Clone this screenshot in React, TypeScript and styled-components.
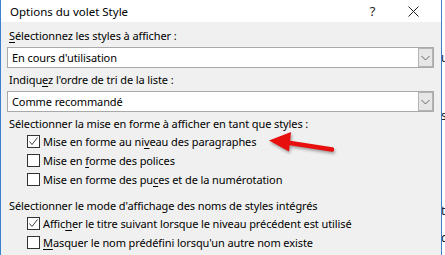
import styled, { createGlobalStyle } from "styled-components";

const GlobalStyle = createGlobalStyle`
  html, body {
    margin: 0;
    padding: 0;
    width: 445px;
    height: 255px;
    overflow: hidden;
    background: #fff;
  }
  body {
    font-family: "Noto Sans", "Open Sans", sans-serif;
    font-size: 11px;
    letter-spacing: -0.1px;
    color: #000;
  }
`;

const Screen = styled.div`
  display: flex;
  width: 445px;
  height: 255px;
  background: #fff;
  position: relative;
  overflow: hidden;
`;

const Dialog = styled.div`
  width: 440px;
  display: flex;
  flex-direction: column;
  border-left: 1px solid #3b80cc;
  border-right: 1px solid #3b80cc;
  background: #f0f0f0;
`;

const TitleBar = styled.div`
  height: 22px;
  background: #fff;
  display: flex;
  align-items: center;
  padding: 0 7px 0 9px;
`;

const Title = styled.div`
  flex: 1;
  font-size: 11.5px;
  letter-spacing: 0;
`;

const TitleButton = styled.div`
  width: 41px;
  display: flex;
  justify-content: center;
  font-size: 13px;
  color: #222;
`;

const Body = styled.div`
  display: flex;
  flex-direction: column;
  padding: 6px 6px 0 6px;
`;

const Label = styled.div<{ $mt?: number }>`
  height: 16px;
  line-height: 16px;
  padding-left: 2px;
  margin-top: ${(p) => p.$mt ?? 0}px;
  white-space: nowrap;
`;

const Key = styled.span`
  text-decoration: underline;
  text-underline-offset: 2px;
`;

const Select = styled.div`
  margin-top: 3px;
  height: 21px;
  box-sizing: border-box;
  width: 427px;
  border: 1px solid #a9a9a9;
  background: #fff;
  display: flex;
  align-items: stretch;
`;

const SelectValue = styled.div`
  flex: 1;
  padding-left: 4px;
  line-height: 19px;
`;

const SelectButton = styled.div`
  width: 15px;
  box-sizing: border-box;
  border: 1px solid #b4b4b4;
  background: #e6e6e6;
  display: flex;
  align-items: center;
  justify-content: center;
`;

const CheckRow = styled.div`
  display: flex;
  align-items: center;
  height: 19px;
  padding-left: 20px;
  white-space: nowrap;
`;

const Box = styled.div`
  width: 13px;
  height: 13px;
  box-sizing: border-box;
  border: 1px solid #333;
  background: #fff;
  margin-right: 3px;
  display: flex;
  align-items: center;
  justify-content: center;
`;

const DocStrip = styled.div`
  flex: 1;
  display: flex;
  flex-direction: column;
  overflow: hidden;
  color: #222;
  font-size: 12px;
`;

const DocLetter = styled.div<{ $mt: number }>`
  margin-top: ${(p) => p.$mt}px;
  margin-left: -1px;
  height: 16px;
  line-height: 16px;
`;

const Arrow = styled.svg`
  position: absolute;
  left: 262px;
  top: 128px;
  filter: drop-shadow(1px 2px 1.5px rgba(0, 0, 0, 0.35));
`;

const Chevron = () => (
  <svg width="9" height="6" viewBox="0 0 9 6">
    <path d="M0.5 1 L4.5 5 L8.5 1" fill="none" stroke="#666" strokeWidth="1" />
  </svg>
);

const Check = () => (
  <svg width="11" height="11" viewBox="0 0 11 11">
    <path d="M1.5 5.5 L4 8.5 L9.5 1.5" fill="none" stroke="#444" strokeWidth="1" />
  </svg>
);

const CheckItem = ({ checked, children }: { checked?: boolean; children: React.ReactNode }) => (
  <CheckRow>
    <Box>{checked && <Check />}</Box>
    <span>{children}</span>
  </CheckRow>
);

export default function App() {
  return (
    <>
      <GlobalStyle />
      <Screen>
        <Dialog>
          <TitleBar>
            <Title>Options du volet Style</Title>
            <TitleButton>?</TitleButton>
            <TitleButton>
              <svg width="11" height="11" viewBox="0 0 11 11">
                <path d="M0.5 0.5 L10.5 10.5 M10.5 0.5 L0.5 10.5" stroke="#222" strokeWidth="1" />
              </svg>
            </TitleButton>
          </TitleBar>
          <Body>
            <Label>
              <Key>S</Key>électionnez les styles à afficher :
            </Label>
            <Select>
              <SelectValue>En cours d'utilisation</SelectValue>
              <SelectButton>
                <Chevron />
              </SelectButton>
            </Select>
            <Label $mt={4}>
              Indiqu<Key>e</Key>z l'ordre de tri de la liste :
            </Label>
            <Select>
              <SelectValue>Comme recommandé</SelectValue>
              <SelectButton>
                <Chevron />
              </SelectButton>
            </Select>
            <Label $mt={4}>Sélectionner la mise en forme à afficher en tant que styles :</Label>
            <CheckItem checked>
              Mise en forme au ni<Key>v</Key>eau des paragraphes
            </CheckItem>
            <CheckItem>
              Mise en <Key>f</Key>orme des polices
            </CheckItem>
            <CheckItem>
              Mise en forme des pu<Key>c</Key>es et de la numérotation
            </CheckItem>
            <Label $mt={9}>Sélectionner le mode d'affichage des noms de styles intégrés</Label>
            <CheckItem checked>
              Affic<Key>h</Key>er le titre suivant lorsque le niveau précédent est utilisé
            </CheckItem>
            <CheckItem>
              <Key>M</Key>asquer le nom prédéfini lorsqu'un autre nom existe
            </CheckItem>
          </Body>
        </Dialog>
        <DocStrip>
          <DocLetter $mt={50}>u</DocLetter>
          <DocLetter $mt={42}>s</DocLetter>
          <DocLetter $mt={79}>t</DocLetter>
          <DocLetter $mt={11}>d</DocLetter>
        </DocStrip>
        <Arrow width="72" height="28" viewBox="0 0 72 28">
          <path d="M28 15 L70 21.5" stroke="#e8100f" strokeWidth="4.5" strokeLinecap="round" />
          <path d="M7 12.5 L29 4 L27 23.5 Z" fill="#e8100f" />
        </Arrow>
      </Screen>
    </>
  );
}
